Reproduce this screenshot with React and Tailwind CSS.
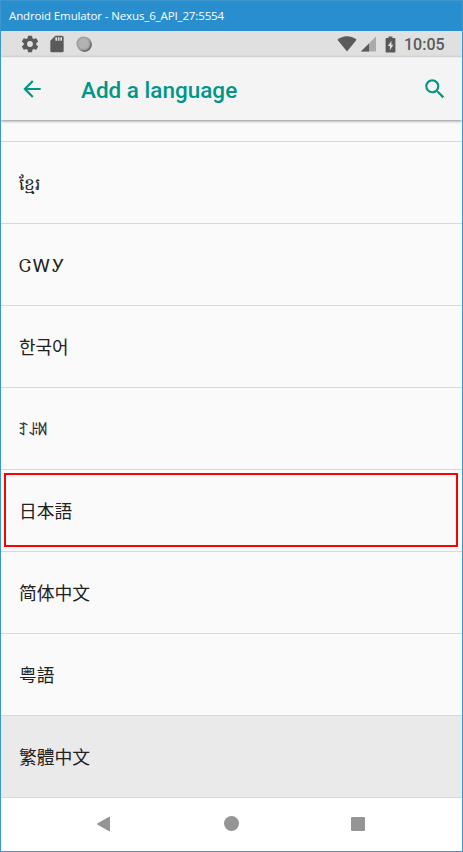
import React from "react";

const languages = [
  { name: "ខ្មែរ", lang: "km", style: "text-[17px] tracking-[-0.3px]" },
  { name: "ᏣᎳᎩ", lang: "chr", style: "text-[17.5px] tracking-[2.1px] font-light" },
  { name: "한국어", lang: "ko", style: "text-[18px]" },
  { name: "ꆈꌠꉙ", lang: "ii", style: "pt-[2px] text-[14.5px] tracking-[-1.4px] font-medium [-webkit-text-stroke:0.3px_#212121] -ml-px" },
  { name: "日本語", lang: "ja", outlined: true, style: "text-[17.7px]" },
  { name: "简体中文", lang: "zh-Hans", style: "text-[17.8px]" },
  { name: "粤語", lang: "yue", style: "text-[17.7px]" },
  { name: "繁體中文", lang: "zh-Hant", pressed: true, style: "text-[17.8px]" },
];

function TitleBar() {
  return (
    <div className="-mx-px h-[31px] shrink-0 border-t border-[#3c97cf] bg-[#288ecd] pl-[9px] font-['Open_Sans','Noto_Sans',sans-serif] text-[11.5px] leading-[29px] tracking-[-0.13px] whitespace-nowrap text-white">
      Android Emulator - Nexus_6_API_27:5554
    </div>
  );
}

function StatusBar() {
  return (
    <div className="flex h-[26px] shrink-0 items-center bg-[#e0e0e0] pr-[18px] pl-[19px] text-[#5a5a5a]">
      <svg className="h-[20px] w-[20px]" viewBox="0 0 24 24" fill="currentColor">
        <path d="M19.43 12.98c.04-.32.07-.64.07-.98s-.03-.66-.07-.98l2.11-1.65a.5.5 0 0 0 .12-.64l-2-3.46a.5.5 0 0 0-.61-.22l-2.49 1a7.3 7.3 0 0 0-1.69-.98l-.38-2.65A.49.49 0 0 0 14 2h-4a.49.49 0 0 0-.49.42l-.38 2.65c-.61.25-1.17.59-1.69.98l-2.49-1a.49.49 0 0 0-.61.22l-2 3.46a.49.49 0 0 0 .12.64l2.11 1.65c-.04.32-.07.65-.07.98s.03.66.07.98l-2.11 1.65a.5.5 0 0 0-.12.64l2 3.46c.12.22.39.3.61.22l2.49-1c.52.4 1.08.73 1.69.98l.38 2.65c.03.24.24.42.49.42h4c.25 0 .46-.18.49-.42l.38-2.65a7.3 7.3 0 0 0 1.69-.98l2.49 1c.23.09.49 0 .61-.22l2-3.46a.5.5 0 0 0-.12-.64zM12 15.5a3.5 3.5 0 1 1 0-7 3.5 3.5 0 0 1 0 7z" />
      </svg>
      <svg className="ml-[7px] h-[20px] w-[20px]" viewBox="0 0 24 24" fill="currentColor">
        <path d="M18 2h-8L4 8v12c0 1.100.9 2 2 2h12c1.100 0 2-.9 2-2V4c0-1.100-.9-2-2-2zm-6 6h-2V4h2v4zm3 0h-2V4h2v4zm3 0h-2V4h2v4z" />
      </svg>
      <svg className="ml-[9px] h-[16px] w-[16px]" viewBox="0 0 16 16">
        <circle cx="8.600" cy="8.600" r="7.300" fill="#666666" />
        <circle cx="7.500" cy="7.500" r="7.100" fill="#a2a2a2" />
        <circle cx="7.500" cy="7.500" r="5.700" fill="#b2b2b2" stroke="#8c8c8c" strokeWidth="1" strokeDasharray="1 1.500" />
      </svg>
      <svg className="ml-auto h-[16px] w-[20px]" viewBox="0 0 20 16" fill="currentColor">
        <path d="M10 15.600 .4 3.800C3 1.500 6.200.2 10 .2s7 1.300 9.600 3.600z" />
      </svg>
      <svg className="ml-[3px] h-[16px] w-[17px]" viewBox="0 0 17 16">
        <path d="M16 .5V15.500H.9z" fill="#aaaaaa" />
        <path d="M9 7.500v8H.9z" fill="#5a5a5a" />
      </svg>
      <svg className="ml-[8px] h-[17px] w-[11px]" viewBox="0 0 11 17">
        <path d="M3.400.5h4v1.500h2.200q.8 0 .8.800v12.900q0 .8-.8.800H1.400q-.8 0-.8-.8V2.800q0-.8.8-.8h2z" fill="#5a5a5a" />
        <path d="M6.400 4.700 2.900 10h2v4.300L8.300 8.700h-1.900z" fill="#e0e0e0" />
      </svg>
      <span className="ml-[8px] w-[40px] pt-[2px] font-[Roboto,sans-serif] text-[16px] leading-[26px] font-medium whitespace-nowrap">
        10:05
      </span>
    </div>
  );
}

function AppBar() {
  return (
    <header className="z-10 flex h-[63px] shrink-0 items-center border-t border-[#eeeeee] bg-[#f4f4f4] pr-[14px] pl-[18px] text-[#009688] shadow-[0_1px_3px_rgba(0,0,0,0.45)]">
      <svg className="h-[26px] w-[26px]" viewBox="0 0 24 24" fill="currentColor">
        <path d="M20 11H7.830l5.590-5.590L12 4l-8 8 8 8 1.410-1.410L7.830 13H20v-2z" />
      </svg>
      <h1 className="ml-[36px] pt-[2px] font-[Roboto,sans-serif] text-[22.5px] leading-[30px] font-medium whitespace-nowrap">
        Add a language
      </h1>
      <svg className="ml-auto h-[26px] w-[26px]" viewBox="0 0 24 24" fill="currentColor">
        <path d="M15.500 14h-.79l-.28-.27A6.471 6.471 0 0 0 16 9.500 6.500 6.500 0 1 0 9.500 16c1.610 0 3.090-.59 4.230-1.570l.27.28v.79l5 4.990L20.490 19l-4.990-5zm-6 0C7.010 14 5 11.990 5 9.500S7.010 5 9.500 5 14 7.010 14 9.500 11.990 14 9.500 14z" />
      </svg>
    </header>
  );
}

function LanguageRow({ name, lang, outlined, pressed, style }) {
  return (
    <li
      className={`relative flex h-[82px] shrink-0 items-center border-t border-[#d9d9d9] pt-[2px] pl-[18px] font-[Roboto,'Noto_Sans_CJK_JP',sans-serif] ${pressed ? "bg-[#eaeaea]" : "bg-[#fafafa]"}`}
    >
      <span lang={lang} className={`leading-[26px] whitespace-nowrap text-[#212121] ${style}`}>
        {name}
      </span>
      {outlined && <div className="absolute top-[3px] right-[4px] bottom-[4px] left-[3px] border-2 border-[#ff0000]" />}
    </li>
  );
}

function NavBar() {
  return (
    <nav className="flex grow items-center border-t border-[#d9d9d9] bg-white pb-[2px] pl-[95px] text-[#959595]">
      <svg className="h-[16px] w-[16px]" viewBox="0 0 16 16" fill="currentColor">
        <path d="M13 .8q1-.4 1 .5v13.400q0 .9-1 .5L1.200 8.500q-.6-.5 0-1z" />
      </svg>
      <div className="ml-[111.5px] h-[15px] w-[15px] rounded-full bg-[#959595]" />
      <div className="ml-[112.5px] h-[14px] w-[14px] rounded-[1px] bg-[#959595]" />
    </nav>
  );
}

export default function App() {
  return (
    <div className="flex h-[852px] w-[463px] flex-col overflow-hidden border-x border-b border-[#3c97cf] bg-white">
      <TitleBar />
      <StatusBar />
      <AppBar />
      <ul className="flex shrink-0 flex-col bg-[#fafafa] pt-[21px]">
        {languages.map((language) => (
          <LanguageRow key={language.name} {...language} />
        ))}
      </ul>
      <NavBar />
    </div>
  );
}
